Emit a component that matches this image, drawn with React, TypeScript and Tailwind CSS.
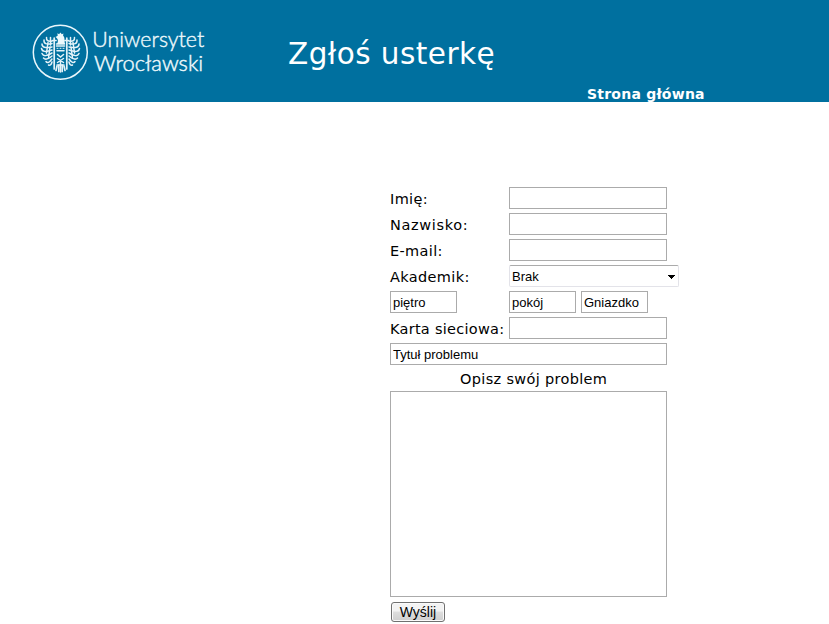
import React from "react";

const field =
  "block h-[22px] rounded-none border border-[#ababab] bg-white px-[2px] pt-px font-['Liberation_Sans',Arial,sans-serif] text-[13px] leading-[18px] text-black outline-none";

function Logo() {
  return (
    <svg width="180" height="60" viewBox="30 22 180 60" className="block" aria-label="Uniwersytet Wrocławski">
      <circle cx="60.3" cy="52.3" r="27" fill="none" stroke="#e8f6fb" strokeWidth="1.5" />
      <g fill="none" stroke="#e4f3f9" strokeLinecap="round">
        <g id="wing">
          <path d="M52 41Q46 42 46.5 37.5M52 43.5Q43.5 45.5 44 40M52 47Q42 49 42 44M52 50Q42.5 53.5 41.5 48.5M52 53Q44 58 42 53.5M52 56Q46 61 43.5 58M52 59Q48 64.5 46 61.5M52 62Q51 66 48.5 65" strokeWidth="1.5" />
          <path d="M50.5 37.5V45M48 42.5L46.5 53M50 47L48.5 58" strokeWidth="1.5" />
          <path d="M54.2 38V69M52.5 40.5H56" strokeWidth="1.7" />
          <path d="M57 66L56 70.5M58.8 65V71.5" strokeWidth="1.7" />
        </g>
        <use href="#wing" transform="translate(121 0) scale(-1 1)" />
        <path d="M56.5 44H64.5M56.5 46H64.5M57 50.8H64M57.5 54.5L60.5 57L63.5 54.5" strokeWidth="1.6" />
        <path d="M57 48.3H64" strokeWidth="1" strokeDasharray="1 2" />
        <path d="M57.5 58.5L63.5 62.5M63.5 58.5L57.5 62.5M57 65H64M60.5 61V72" strokeWidth="1.5" />
      </g>
      <path d="M57 44C58.5 41 58.3 38.6 55.5 36.9L57.7 35.7 57.4 33.3 59.1 34.2 60.4 32.4 61.8 34.2 63.4 33.4 63.1 35.7C65.2 37.4 64.2 40.3 65 44Z" fill="#eef9fc" />
      <g fill="#eef9fc" fontFamily="Lato, sans-serif" fontWeight="300" stroke="#eef9fc" strokeWidth="0.4">
        <text x="92.3" y="47" fontSize="21.3" textLength="112" lengthAdjust="spacingAndGlyphs">Uniwersytet</text>
        <text x="94" y="70.9" fontSize="19.5" textLength="109.2" lengthAdjust="spacingAndGlyphs" transform="translate(0 -5.67) scale(1 1.08)">Wrocławski</text>
      </g>
    </svg>
  );
}

function Row({ label, tracking = "tracking-[0.35px]", children }: { label: string; tracking?: string; children: React.ReactNode }) {
  return (
    <div className="flex h-[22px]">
      <span className={`w-[119px] shrink-0 whitespace-nowrap pt-px text-[14.5px] leading-[22px] ${tracking}`}>{label}</span>
      {children}
    </div>
  );
}

export default function App() {
  return (
    <div className="h-[624px] w-[829px] overflow-hidden bg-white font-['DejaVu_Sans',Verdana,sans-serif] text-black">
      <header className="flex h-[102px] bg-[#00709f] text-white">
        <div className="w-[288px] shrink-0 pl-[30px] pt-[22px]">
          <Logo />
        </div>
        <h1 className="w-[299px] shrink-0 whitespace-nowrap pt-[34px] text-[29.5px] leading-[40px] tracking-[0.45px]">Zgłoś usterkę</h1>
        <a className="whitespace-nowrap pt-[84px] text-[14px] font-bold leading-[20px] tracking-[0.23px]">Strona główna</a>
      </header>
      <form className="ml-[390px] flex w-[289px] flex-col gap-1 pt-[85px]" onSubmit={(e) => e.preventDefault()}>
        <Row label="Imię:">
          <input className={`${field} w-[158px]`} />
        </Row>
        <Row label="Nazwisko:" tracking="tracking-[0.65px]">
          <input className={`${field} w-[158px]`} />
        </Row>
        <Row label="E-mail:">
          <input className={`${field} w-[158px]`} />
        </Row>
        <Row label="Akademik:">
          <button
            type="button"
            className="flex h-[22px] w-[170px] items-center justify-between rounded-[2px] border border-[#e3e3e9] border-t-[#ababab] bg-white pl-[2px] pr-[3px] font-['Liberation_Sans',Arial,sans-serif] text-[13px] leading-[18px]"
          >
            <span className="pt-[2px]">Brak</span>
            <svg width="7" height="4" viewBox="0 0 7 4" className="mt-[2px]" shapeRendering="crispEdges">
              <path d="M0 0H7V1H6V2H5V3H4V4H3V3H2V2H1V1H0Z" />
            </svg>
          </button>
        </Row>
        <div className="flex">
          <input className={`${field} mr-[52px] w-[67px]`} defaultValue="piętro" />
          <input className={`${field} mr-[5px] w-[67px]`} defaultValue="pokój" />
          <input className={`${field} w-[67px]`} defaultValue="Gniazdko" />
        </div>
        <Row label="Karta sieciowa:" tracking="tracking-[0.27px]">
          <input className={`${field} w-[158px]`} />
        </Row>
        <input className={`${field} w-[277px]`} defaultValue="Tytuł problemu" />
        <div className="h-[18px] whitespace-nowrap pl-[70px] text-[14.5px] leading-[20px] tracking-[0.33px]">Opisz swój problem</div>
        <textarea className="block h-[206px] w-[277px] resize-none border border-[#ababab] bg-white outline-none" />
        <button className="ml-px mt-px h-[20px] w-[54px] rounded-[3px] border border-[#707070] bg-linear-to-b from-[#f3f3f3] from-45% via-[#dedede] via-50% to-[#cfcfcf] pt-px font-['Liberation_Sans',Arial,sans-serif] text-[14px] leading-[17px] shadow-[inset_0_0_0_1px_#fafafa]">
          Wyślij
        </button>
      </form>
    </div>
  );
}
